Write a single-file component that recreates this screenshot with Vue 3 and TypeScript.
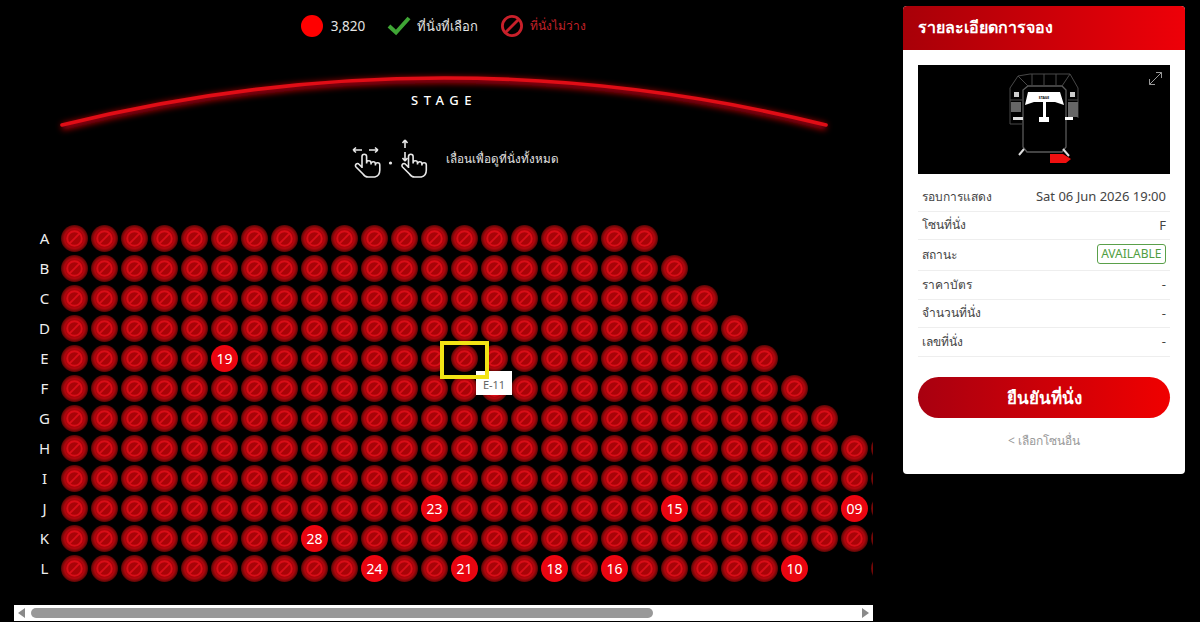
<script setup lang="ts">
interface Seat { key: string; num?: string; empty?: boolean; picked?: boolean }
interface Row { label: string; seats: Seat[] }

const counts: Record<string, number> = { A: 20, B: 21, C: 22, D: 23, E: 24, F: 25, G: 26, H: 28, I: 28, J: 28, K: 28, L: 28 }
const open: Record<string, string> = {
  'E-6': '19', 'J-13': '23', 'J-21': '15', 'J-27': '09', 'K-9': '28',
  'L-11': '24', 'L-14': '21', 'L-17': '18', 'L-19': '16', 'L-25': '10'
}
const rows: Row[] = Object.keys(counts).map((label) => ({
  label,
  seats: Array.from({ length: counts[label] }, (_, i) => {
    const col = i + 1
    return {
      key: `${label}-${col}`,
      num: open[`${label}-${col}`],
      empty: label === 'L' && (col === 26 || col === 27),
      picked: label === 'E' && col === 14
    }
  })
}))
const details = [
  { label: 'รอบการแสดง', value: 'Sat 06 Jun 2026 19:00' },
  { label: 'โซนที่นั่ง', value: 'F' },
  { label: 'สถานะ', badge: 'AVAILABLE' },
  { label: 'ราคาบัตร', value: '-' },
  { label: 'จำนวนที่นั่ง', value: '-' },
  { label: 'เลขที่นั่ง', value: '-' }
]
const handPath = 'M362 170V158.6a2.3 2.3 0 0 1 4.6 0V165.5M366.6 165a2.2 2.2 0 0 1 4.4 0v1.5M371 166a2.2 2.2 0 0 1 4.4 0v1.5M375.4 167a2.2 2.2 0 0 1 4.4 0V172q0 6-5 7H368q-3 0-5-3l-7-7a2 2 0 0 1 3-2.8l3 3'
</script>

<template>
  <div class="page">
    <main class="left">
      <div class="legend">
        <span class="dot"></span>
        <span class="lg-text count">3,820</span>
        <svg class="lg-icon" width="24" height="20" viewBox="0 0 24 20">
          <path d="M2 10l7 6.500L22 2" fill="none" stroke="#3fa535" stroke-width="4" />
        </svg>
        <span class="lg-text pick">ที่นั่งที่เลือก</span>
        <svg class="lg-icon" width="24" height="24" viewBox="0 0 24 24">
          <circle cx="12" cy="12" r="9.600" fill="none" stroke="#c8202a" stroke-width="2.800" />
          <path d="M5.500 18.500L18.500 5.500" stroke="#c8202a" stroke-width="2.800" />
        </svg>
        <span class="lg-text busy">ที่นั่งไม่ว่าง</span>
      </div>

      <svg class="stage" width="859" height="85" viewBox="14 60 859 85">
        <defs>
          <filter id="glow" x="-5%" y="-60%" width="110%" height="220%">
            <feGaussianBlur stdDeviation="3" />
          </filter>
        </defs>
        <path d="M62 127Q444 33 826 127" fill="none" stroke="#c00010" stroke-width="6" filter="url(#glow)" />
        <path d="M62 125Q444 31 826 125" fill="none" stroke="#e00d16" stroke-width="3.600" stroke-linecap="round" />
        <text x="444" y="105" text-anchor="middle" class="stage-label">STAGE</text>
      </svg>

      <div class="hint">
        <svg class="hand" width="80" height="42" viewBox="350 140 80 42" fill="none" stroke="#e8e8e8" stroke-width="1.600">
          <path :d="handPath" />
          <path d="M353 152h9M353 152l3-2.500M353 152l3 2.500M369 152h9M378 152l-3-2.500M378 152l-3 2.500" />
          <circle cx="390.500" cy="165" r="1.600" fill="#e8e8e8" stroke="none" />
          <path :d="handPath" transform="translate(46.500 0)" />
          <path d="M405 142v8M405 142l-2.500 3M405 142l2.500 3M405 154v9M405 163l-2.500-3M405 163l2.500-3" />
        </svg>
        <span class="hint-text">เลื่อนเพื่อดูที่นั่งทั้งหมด</span>
      </div>

      <div class="plan">
        <div v-for="row in rows" :key="row.label" class="row">
          <span class="row-label">{{ row.label }}</span>
          <div v-for="s in row.seats" :key="s.key" class="cell">
            <template v-if="!s.empty">
              <template v-if="s.picked">
                <span class="focus"></span>
                <span class="tip">E-11</span>
                <span class="frame"></span>
              </template>
              <span v-if="s.num" class="seat free">{{ s.num }}</span>
              <span v-else class="seat taken" :class="{ top: s.picked }">
                <svg width="19" height="19" viewBox="0 0 19 19" fill="none" stroke="#d80e18" stroke-width="2">
                  <circle cx="9.500" cy="9.500" r="7.300" />
                  <path d="M4.400 14.600L14.600 4.400" />
                </svg>
              </span>
            </template>
          </div>
        </div>
      </div>

      <div class="scrollbar">
        <span class="arrow back"></span>
        <div class="track"><span class="thumb"></span></div>
        <span class="arrow fwd"></span>
      </div>
    </main>

    <aside class="panel">
      <h2 class="panel-head">รายละเอียดการจอง</h2>
      <div class="panel-body">
        <div class="map">
          <svg width="252" height="109" viewBox="918 65 252 109" fill="none" stroke="#484848" stroke-width="1">
            <path d="M1010 88L1018 76L1030 74H1060L1070 74L1078 88V118M1010 88V124H1022" />
            <path d="M1023 147V90L1028 86H1062L1066 90V147L1062 152H1027Z" stroke="#5a5a5a" stroke-width="1.300" />
            <path d="M1018 76L1028 86M1070 74L1062 86M1032 74V85M1044 74V85M1056 74V85M1010 100H1022M1068 100H1078" />
            <path d="M1028 92H1060L1064 105L1055 102H1046V117H1049V122H1039V117H1043V102H1034L1025 105Z" fill="#fff" stroke="none" />
            <text x="1044" y="99" text-anchor="middle" class="map-label">STAGE</text>
            <rect x="1011" y="102" width="10" height="10" fill="#666" stroke="none" />
            <rect x="1068" y="102" width="10" height="15" fill="#666" stroke="none" />
            <rect x="1013" y="117" width="10" height="3" fill="#ddd" stroke="none" />
            <rect x="1065" y="117" width="8" height="3" fill="#fff" stroke="none" />
            <rect x="1014" y="92" width="5" height="5" fill="#ccc" stroke="none" />
            <rect x="1070" y="92" width="5" height="5" fill="#ccc" stroke="none" />
            <path d="M1019 155L1024 149M1063 149L1069 156" stroke="#ddd" stroke-width="2" />
            <path d="M1050 154H1063L1071 159L1066 163H1050Z" fill="#f01010" stroke="none" />
            <path d="M1149.500 84.500L1161.500 72.500M1156 72.500H1161.500V78M1149.500 79V84.500H1155" stroke="#999" />
          </svg>
        </div>
        <div v-for="d in details" :key="d.label" class="info">
          <span class="info-label">{{ d.label }}</span>
          <span v-if="d.badge" class="badge">{{ d.badge }}</span>
          <span v-else>{{ d.value }}</span>
        </div>
        <button class="confirm" type="button">ยืนยันที่นั่ง</button>
        <div class="other">&lt; เลือกโซนอื่น</div>
      </div>
    </aside>
  </div>
</template>

<style scoped>
.page {
  display: flex;
  width: 1200px;
  height: 622px;
  overflow: hidden;
  background: #000;
  font-family: "Noto Sans", "Open Sans", sans-serif;
  color: #fff;
}
.left {
  flex: 0 0 859px;
  width: 859px;
  margin-left: 14px;
  overflow: hidden;
  display: flex;
  flex-direction: column;
}
.legend {
  height: 60px;
  padding: 0 0 8px;
  box-sizing: border-box;
  display: flex;
  align-items: center;
  justify-content: center;
  font-size: 13px;
}
.dot {
  width: 22px;
  height: 22px;
  border-radius: 50%;
  background: #f00;
}
.lg-text { line-height: 20px; color: #e4e4e4; }
.count { margin: 0 22px 0 8px; font-size: 13.500px; }
.pick { margin: 0 22px 0 6px; }
.busy { margin-left: 6px; color: #c42028; font-size: 12px; }
.stage { display: block; flex: none; }
.stage-label {
  fill: #fff;
  font-size: 13px;
  font-weight: 500;
  letter-spacing: 5.500px;
}
.hint {
  height: 42px;
  margin-top: -7px;
  padding-left: 336px;
  display: flex;
  align-items: center;
}
.hand { display: block; flex: none; }
.hint-text { margin-left: 16px; font-size: 11.700px; color: #e4e4e4; }
.plan { margin-top: 43px; flex: none; }
.row { display: flex; height: 30px; }
.row-label {
  flex: none;
  width: 30px;
  margin-left: 15.500px;
  line-height: 30px;
  text-align: center;
  font-size: 15px;
  color: #eee;
}
.cell {
  position: relative;
  flex: none;
  width: 30px;
  height: 30px;
  display: flex;
  align-items: center;
  justify-content: center;
}
.seat {
  width: 27px;
  height: 27px;
  border-radius: 50%;
  display: flex;
  align-items: center;
  justify-content: center;
}
.taken {
  background: radial-gradient(circle closest-side, #a80408 0 62%, #b00610 74%, #860808 86%, #580606 100%);
}
.top { position: relative; z-index: 3; }
.free {
  background: #ea0510;
  font-size: 14px;
  color: #fff;
}
.focus, .frame {
  position: absolute;
  left: -9.500px;
  top: -2px;
  width: 49px;
  height: 38px;
  box-sizing: border-box;
}
.focus { background: #000; z-index: 1; }
.frame { border: 4px solid #f2e414; z-index: 4; }
.tip {
  position: absolute;
  left: 26.500px;
  top: 28px;
  width: 36px;
  height: 24px;
  padding-top: 4px;
  box-sizing: border-box;
  background: #fff;
  color: #666;
  font-size: 11px;
  line-height: 20px;
  text-align: center;
  z-index: 2;
}
.scrollbar {
  margin-top: 22px;
  height: 16px;
  flex: none;
  background: #fff;
  display: flex;
  align-items: center;
  padding: 0 4px;
  box-sizing: border-box;
}
.arrow {
  flex: none;
  width: 0;
  height: 0;
  border-top: 5px solid transparent;
  border-bottom: 5px solid transparent;
}
.back { border-right: 7px solid #8a8a8a; }
.fwd { border-left: 7px solid #8a8a8a; }
.track { flex: 1; padding: 0 6px; }
.thumb {
  display: block;
  width: 622px;
  height: 10px;
  border-radius: 5px;
  background: #999;
}
.panel {
  flex: none;
  width: 282px;
  height: 468px;
  margin: 6px 0 0 30px;
  background: #fff;
  border-radius: 4px;
  overflow: hidden;
}
.panel-head {
  margin: 0;
  height: 44px;
  padding-left: 15px;
  background: linear-gradient(90deg, #a80008, #ee0008);
  font-size: 16px;
  font-weight: 600;
  line-height: 43px;
  color: #fff;
}
.panel-body { padding: 15px 15px 0; }
.map { height: 109px; margin-bottom: 9px; background: #000; }
.map svg { display: block; }
.map-label { fill: #000; stroke: none; font-size: 3.500px; font-weight: 700; }
.info {
  box-sizing: border-box;
  min-height: 29px;
  padding: 0 4px 2px;
  border-bottom: 1px solid #eee;
  display: flex;
  align-items: center;
  justify-content: space-between;
  font-size: 13px;
  color: #444;
}
.info-label { font-size: 12px; }
.info:nth-child(3), .info:nth-child(6) { min-height: 28px; }
.info:nth-child(4) { min-height: 31px; }
.badge {
  height: 18px;
  padding: 0 3.500px;
  border: 1px solid #5aa04a;
  border-radius: 3px;
  line-height: 18px;
  font-size: 12px;
  color: #4f9e42;
}
.confirm {
  display: block;
  width: 100%;
  height: 41px;
  margin-top: 20px;
  border: 0;
  border-radius: 21px;
  background: linear-gradient(90deg, #a80010, #f00000);
  color: #fff;
  font-family: inherit;
  font-size: 17px;
  font-weight: 600;
}
.other {
  margin-top: 13px;
  text-align: center;
  font-size: 12px;
  color: #999;
}
</style>
<style>
body { background: #000; }
</style>
